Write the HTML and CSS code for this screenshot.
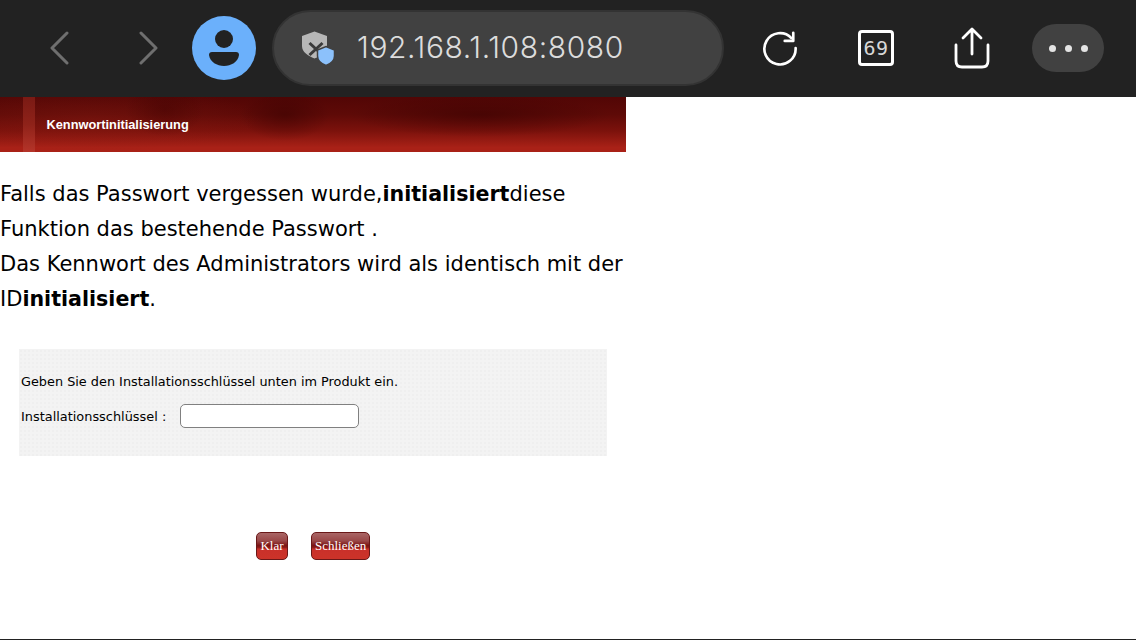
FILE: index.html
```html
<!DOCTYPE html>
<html lang="de">
<head>
    <meta charset="UTF-8">
    <meta name="viewport" content="width=device-width, initial-scale=1.0">
    <title>Kennwortinitialisierung</title>
    <link rel="stylesheet" href="styles.css">
</head>
<body>

<div class="toolbar">
    <div class="nav-btn back">
        <svg width="20" height="34" viewBox="0 0 20 34"><path d="M18 2 L3 17 L18 32" fill="none" stroke="#6f6f6f" stroke-width="3" stroke-linecap="round" stroke-linejoin="round"/></svg>
    </div>
    <div class="nav-btn forward">
        <svg width="20" height="34" viewBox="0 0 20 34"><path d="M2 2 L17 17 L2 32" fill="none" stroke="#6f6f6f" stroke-width="3" stroke-linecap="round" stroke-linejoin="round"/></svg>
    </div>
    <div class="avatar">
        <svg width="30" height="36" viewBox="0 0 30 36"><circle cx="15" cy="9" r="9" fill="#222"/><path d="M3 22 H27 Q30 22 30 25 C29 32 22 36 15 36 C8 36 1 32 0 25 Q0 22 3 22 Z" fill="#222"/></svg>
    </div>
    <div class="url-bar">
        <svg class="shield" width="35" height="37" viewBox="0 0 35 37">
            <path d="M13.500 1.500 L26 6 V16 C26 22 20 26 13.500 28.500 C7 26 1 22 1 16 V6 Z" fill="#b7b7b7"/>
            <path d="M8.500 13 L21.500 25 M21.500 13 L8.500 25" stroke="#3a3a3a" stroke-width="3"/>
            <path d="M25 16.500 L33.500 20 V26 C33.500 31 29 34 25 35.500 C21 34 16.500 31 16.500 26 V20 Z" fill="#8cc1fb" stroke="#414141" stroke-width="1.500"/>
        </svg>
        <span class="url-text">192.168.1.108:8080</span>
    </div>
    <div class="tool-btn reload">
        <svg width="38" height="38" viewBox="0 0 38 38"><path d="M31 8.500 A16.500 16.500 0 1 0 35.500 19" fill="none" stroke="#fff" stroke-width="2.800" stroke-linecap="round"/><path d="M24 11.500 H33 V3" fill="none" stroke="#fff" stroke-width="2.800" stroke-linecap="round" stroke-linejoin="round"/></svg>
    </div>
    <div class="tool-btn tabs"><span class="tab-count">69</span></div>
    <div class="tool-btn share">
        <svg width="36" height="42" viewBox="0 0 36 42"><path d="M18 27 V3 M9 11 L18 2 L27 11" fill="none" stroke="#fff" stroke-width="2.800" stroke-linecap="round" stroke-linejoin="round"/><path d="M2 18 V34 Q2 40 8 40 H28 Q34 40 34 34 V18" fill="none" stroke="#fff" stroke-width="2.800" stroke-linecap="round"/></svg>
    </div>
    <div class="more-btn"><i></i><i></i><i></i></div>
</div>

<div class="page">
    <div class="content">
        <div class="banner">
            <div class="banner-stripe"></div>
            <div class="banner-title">Kennwortinitialisierung</div>
        </div>
        <p class="intro">Falls das Passwort vergessen wurde,<b>initialisiert</b>diese Funktion das bestehende Passwort .<br>Das Kennwort des Administrators wird als identisch mit der ID<b>initialisiert</b>.</p>
        <div class="panel">
            <p class="panel-text">Geben Sie den Installationsschlüssel unten im Produkt ein.</p>
            <div class="panel-row">
                <label for="key">Installationsschlüssel :</label>
                <input type="text" id="key">
            </div>
        </div>
        <div class="actions">
            <button class="red-btn">Klar</button>
            <button class="red-btn">Schließen</button>
        </div>
    </div>
</div>

</body>
</html>
```

FILE: styles.css
```css
html, body {
    margin: 0;
    padding: 0;
    height: 640px;
    overflow: hidden;
}
body {
    display: flex;
    flex-direction: column;
    background-color: white;
    font-family: "DejaVu Sans", Verdana, sans-serif;
}
.toolbar {
    height: 97px;
    box-sizing: border-box;
    padding-bottom: 1px;
    flex-shrink: 0;
    display: flex;
    align-items: center;
    background-color: #222222;
}
.nav-btn {
    display: flex;
    align-items: center;
}
.back {
    margin-left: 49px;
}
.forward {
    margin-left: 70px;
}
.avatar {
    width: 64px;
    height: 64px;
    margin-left: 33px;
    border-radius: 50%;
    background-color: #6bb0fb;
    display: flex;
    align-items: center;
    justify-content: center;
}
.url-bar {
    width: 448px;
    height: 72px;
    margin-left: 16px;
    border: 2px solid #333333;
    border-radius: 38px;
    background-color: #414141;
    display: flex;
    align-items: center;
}
.shield {
    margin-left: 27px;
}
.url-text {
    margin: 0 0 2px 21px;
    font-family: Inter, "Noto Sans", sans-serif;
    font-size: 30px;
    font-weight: 300;
    letter-spacing: 0.6px;
    color: #dcdcdc;
}
.tool-btn {
    display: flex;
    align-items: center;
    justify-content: center;
    width: 36px;
}
.reload {
    margin-left: 38px;
}
.tabs {
    margin-left: 60px;
    height: 36px;
    box-sizing: border-box;
    border: 3px solid white;
    border-radius: 4px;
}
.tab-count {
    font-family: "DejaVu Sans Mono", monospace;
    font-size: 20px;
    letter-spacing: 0.5px;
    color: #d8d8d8;
}
.share {
    margin-left: 60px;
}
.more-btn {
    width: 72px;
    height: 48px;
    margin-left: 42px;
    border-radius: 24px;
    background-color: #414141;
    display: flex;
    align-items: center;
    justify-content: center;
    gap: 9px;
}
.more-btn i {
    width: 7px;
    height: 7px;
    border-radius: 50%;
    background-color: #e4e4e4;
}
.page {
    flex: 1;
    border-bottom: 1px solid #222222;
}
.content {
    width: 626px;
}
.banner {
    height: 55px;
    display: flex;
    align-items: center;
    background:
        radial-gradient(ellipse 40px 28px at 165px 12px, rgba(60, 0, 0, 0.4), transparent),
        radial-gradient(ellipse 45px 26px at 285px 18px, rgba(50, 0, 0, 0.45), transparent),
        radial-gradient(ellipse 130px 22px at 480px 18px, rgba(50, 0, 0, 0.5), transparent),
        radial-gradient(ellipse 170px 34px at 90px 22px, rgba(140, 30, 20, 0.35), transparent),
        linear-gradient(#520605, #5e0a07 32%, #7c120c 62%, #a92117 92%);
}
.banner-stripe {
    width: 12px;
    height: 100%;
    margin-left: 23px;
    background: linear-gradient(#7a1a14, #8f2219 50%, #b53429);
}
.banner-title {
    margin-left: 11.500px;
    font-family: "Liberation Sans", Arial, sans-serif;
    font-size: 12.800px;
    font-weight: bold;
    color: white;
}
.intro {
    margin: 25px 0 0;
    font-size: 21px;
    line-height: 35px;
    color: black;
}
.intro b {
    font-size: 20.600px;
}
.panel {
    width: 588px;
    height: 107px;
    box-sizing: border-box;
    margin: 32px 0 0 19px;
    padding: 25px 0 0 2px;
    background-color: #f3f3f3;
    background-image: radial-gradient(#efefef 1px, transparent 1px);
    background-size: 4px 4px;
}
.panel-text {
    margin: 0;
    font-size: 12.850px;
    line-height: 16px;
    color: black;
}
.panel-row {
    display: flex;
    align-items: center;
    margin-top: 14px;
    font-size: 12.900px;
    color: black;
}
.panel-row input {
    width: 179px;
    height: 24px;
    box-sizing: border-box;
    margin: 0 0 0 14px;
    border: 1px solid #808080;
    border-radius: 5px;
    background-color: white;
}
.actions {
    display: flex;
    gap: 23px;
    margin: 76px 0 0 256px;
}
.red-btn {
    min-width: 32px;
    height: 28px;
    box-sizing: border-box;
    padding: 0 3px;
    border: 1px solid #6a1818;
    border-radius: 5px;
    background: linear-gradient(#a96666, #9a4848 30%, #7c1414 48%, #8a1a16 55%, #c9302a 62%, #cc3329);
    font-family: "Liberation Serif", serif;
    font-size: 13px;
    color: white;
}
```
